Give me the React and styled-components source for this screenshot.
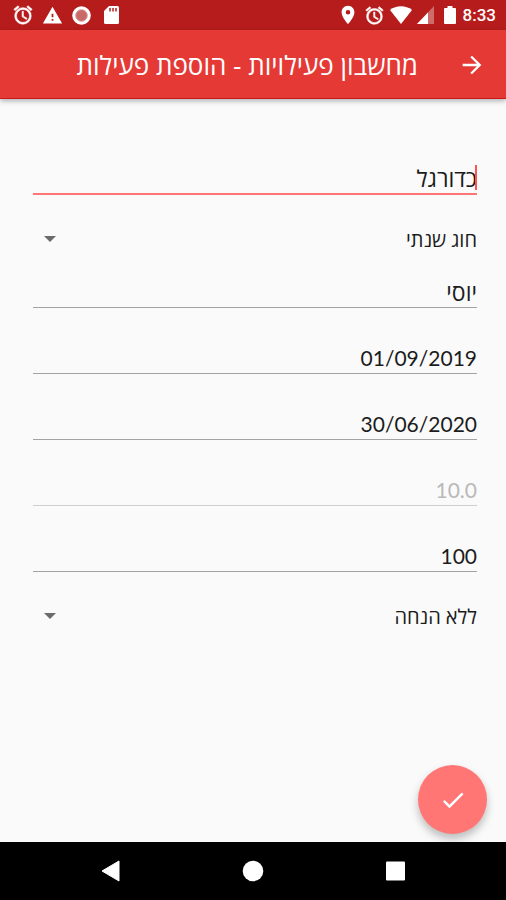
import { useState } from "react";
import styled, { createGlobalStyle } from "styled-components";
import {
  MdAlarm,
  MdArrowForward,
  MdCheck,
  MdLocationOn,
  MdWarning,
} from "react-icons/md";

const GlobalStyle = createGlobalStyle`
  * {
    box-sizing: border-box;
  }
  body {
    margin: 0;
    background: #fafafa;
    font-family: Lato, "Open Sans", "Noto Sans", sans-serif;
  }
`;

const Page = styled.div`
  display: flex;
  flex-direction: column;
  min-height: 100vh;
`;

const StatusBar = styled.div`
  display: flex;
  justify-content: space-between;
  align-items: center;
  direction: ltr;
  height: 30px;
  padding: 0 10px 0 12px;
  background: #b71c1c;
  color: #fff;
`;
const StatusGroup = styled.div`
  display: flex;
  align-items: center;
  gap: ${(props) => props.$gap ?? "8px"};
`;
// the first path of the icon is its empty bounding box
const AlarmIcon = styled(MdAlarm)`
  stroke-width: 0;
  path:last-child {
    stroke: #fff;
    stroke-width: 0.6;
  }
`;
const Clock = styled.span`
  margin-left: 2px;
  font-family: Roboto, sans-serif;
  font-size: 17px;
  font-weight: 500;
  line-height: 30px;
`;

const AppBar = styled.header`
  display: flex;
  align-items: center;
  gap: 40px;
  height: 69px;
  padding: 2px 20px 0;
  background: #e53935;
  border-bottom: 1px solid #c91a1a;
  box-shadow: 0 2px 5px rgba(0, 0, 0, 0.3);
  color: #fff;
`;
const BackButton = styled.button`
  display: flex;
  padding: 0;
  border: none;
  background: none;
  color: inherit;
`;
const Title = styled.h1`
  margin: 0;
  font-family: "Open Sans", "Noto Sans", sans-serif;
  font-size: 26px;
  font-weight: 400;
  white-space: nowrap;
`;

const Form = styled.form`
  flex: 1;
  padding: 50px 29px 0 33px;
`;
const Field = styled.div`
  position: relative;
  display: flex;
  margin-bottom: ${(props) => props.$gap ?? "20px"};
`;
const TextInput = styled.input`
  width: 100%;
  height: 46px;
  padding: 14px 0 0;
  border: none;
  border-bottom: ${(props) =>
    props.$active ? "2px solid #ff7675" : "1px solid #a3a3a3"};
  border-radius: 0;
  outline: none;
  background: none;
  color: #1c1c1c;
  caret-color: ${(props) => (props.$active ? "transparent" : "#ff5252")};
  font-family: inherit;
  font-size: ${(props) => (props.$numeric ? "21px" : "23px")};
  &:disabled {
    border-color: #cfcfcf;
    color: #b9b9b9;
  }
`;
const Caret = styled.span`
  position: absolute;
  right: 0;
  bottom: 5px;
  width: 2px;
  height: 25px;
  background: #ff5252;
`;
const Select = styled.select`
  appearance: none;
  width: 100%;
  height: 47px;
  padding: 0;
  border: none;
  outline: none;
  background: none;
  color: #1c1c1c;
  font-family: inherit;
  font-size: 20px;
`;
const SelectArrow = styled.svg`
  position: absolute;
  left: 11px;
  top: 21px;
  pointer-events: none;
`;

const Fab = styled.button`
  position: fixed;
  right: 19px;
  bottom: 66px;
  display: flex;
  align-items: center;
  justify-content: center;
  width: 69px;
  height: 69px;
  padding: 0;
  border: none;
  border-radius: 50%;
  background: #ff7675;
  box-shadow: 0 5px 8px rgba(0, 0, 0, 0.25);
  color: #fff;
`;

const NavBar = styled.nav`
  display: flex;
  align-items: center;
  justify-content: center;
  gap: 114px;
  direction: ltr;
  height: 58px;
  background: #000;
`;
const NavButton = styled.button`
  display: flex;
  padding: 0;
  border: none;
  background: none;
`;

function TextField({ label, defaultValue, active, disabled, numeric }) {
  return (
    <Field>
      <TextInput
        type="text"
        aria-label={label}
        defaultValue={defaultValue}
        disabled={disabled}
        $active={active}
        $numeric={numeric}
      />
      {active && <Caret />}
    </Field>
  );
}

function SelectField({ label, options }) {
  const [value, setValue] = useState(options[0]);
  return (
    <Field $gap="0">
      <Select
        aria-label={label}
        value={value}
        onChange={(e) => setValue(e.target.value)}
      >
        {options.map((option) => (
          <option key={option}>{option}</option>
        ))}
      </Select>
      <SelectArrow width="12" height="6" viewBox="0 0 12 6">
        <path d="M0 0h12L6 6z" fill="#6b6b6b" />
      </SelectArrow>
    </Field>
  );
}

export default function App() {
  return (
    <Page dir="rtl" lang="he">
      <GlobalStyle />
      <StatusBar>
        <StatusGroup>
          <AlarmIcon size={22} />
          <MdWarning size={21} />
          <svg width="21" height="21" viewBox="0 0 21 21">
            <circle cx="10.5" cy="10.5" r="9.3" fill="#fff" />
            <circle cx="10.5" cy="10.5" r="5.8" fill="#c96a6a" />
            <circle cx="10.5" cy="10.5" r="5.8" fill="none" stroke="#d99" />
          </svg>
          <svg width="22" height="22" viewBox="0 0 22 22">
            <path
              d="M9 2h8.5a1.5 1.5 0 0 1 1.5 1.5v15a1.5 1.5 0 0 1-1.5 1.5h-12A1.5 1.5 0 0 1 4 18.5V7z"
              fill="#fff"
            />
            <path d="M10 4v3.5M13 4v3.5M16 4v3.5" stroke="#b71c1c" strokeWidth="1.5" />
          </svg>
        </StatusGroup>
        <StatusGroup $gap="5px">
          <MdLocationOn size={22} />
          <AlarmIcon size={21} />
          <svg width="22" height="18" viewBox="0 0 22 18">
            <path d="M0 4C6-1 16-1 22 4L11 18z" fill="#fff" />
          </svg>
          <StatusGroup $gap="10px">
            <svg width="17" height="18" viewBox="0 0 17 18">
              <path d="M17 0v18H0z" fill="#fff" opacity="0.35" />
              <path d="M11 6.4V18H0z" fill="#fff" />
            </svg>
            <svg width="12" height="18" viewBox="0 0 12 18">
              <path
                d="M3.500 0h5v2H11a1 1 0 0 1 1 1v14a1 1 0 0 1-1 1H1a1 1 0 0 1-1-1V3a1 1 0 0 1 1-1h2.500z"
                fill="#fff"
              />
            </svg>
          </StatusGroup>
          <Clock>8:33</Clock>
        </StatusGroup>
      </StatusBar>
      <AppBar>
        <BackButton type="button" aria-label="חזרה">
          <MdArrowForward size={28} />
        </BackButton>
        <Title>מחשבון פעילויות - הוספת פעילות</Title>
      </AppBar>
      <Form id="activity" onSubmit={(e) => e.preventDefault()}>
        <TextField label="שם הפעילות" defaultValue="כדורגל" active />
        <SelectField label="סוג הפעילות" options={["חוג שנתי"]} />
        <TextField label="שם הילד" defaultValue="יוסי" />
        <TextField label="תאריך התחלה" defaultValue="01/09/2019" numeric />
        <TextField label="תאריך סיום" defaultValue="30/06/2020" numeric />
        <TextField label="מספר חודשים" defaultValue="10.0" numeric disabled />
        <TextField label="מחיר" defaultValue="100" numeric />
        <SelectField label="הנחה" options={["ללא הנחה"]} />
      </Form>
      <Fab type="submit" form="activity" aria-label="שמירה">
        <MdCheck size={28} />
      </Fab>
      <NavBar>
        <NavButton type="button" aria-label="הקודם">
          <svg width="28" height="22" viewBox="0 0 28 22">
            <path d="M5 11 22 1v20z" fill="#fff" stroke="#fff" />
          </svg>
        </NavButton>
        <NavButton type="button" aria-label="בית">
          <svg width="28" height="22" viewBox="0 0 28 22">
            <circle cx="14" cy="11" r="10.3" fill="#fff" />
          </svg>
        </NavButton>
        <NavButton type="button" aria-label="יישומים אחרונים">
          <svg width="28" height="22" viewBox="0 0 28 22">
            <rect x="5" y="1.5" width="19" height="19" rx="1" fill="#fff" />
          </svg>
        </NavButton>
      </NavBar>
    </Page>
  );
}
